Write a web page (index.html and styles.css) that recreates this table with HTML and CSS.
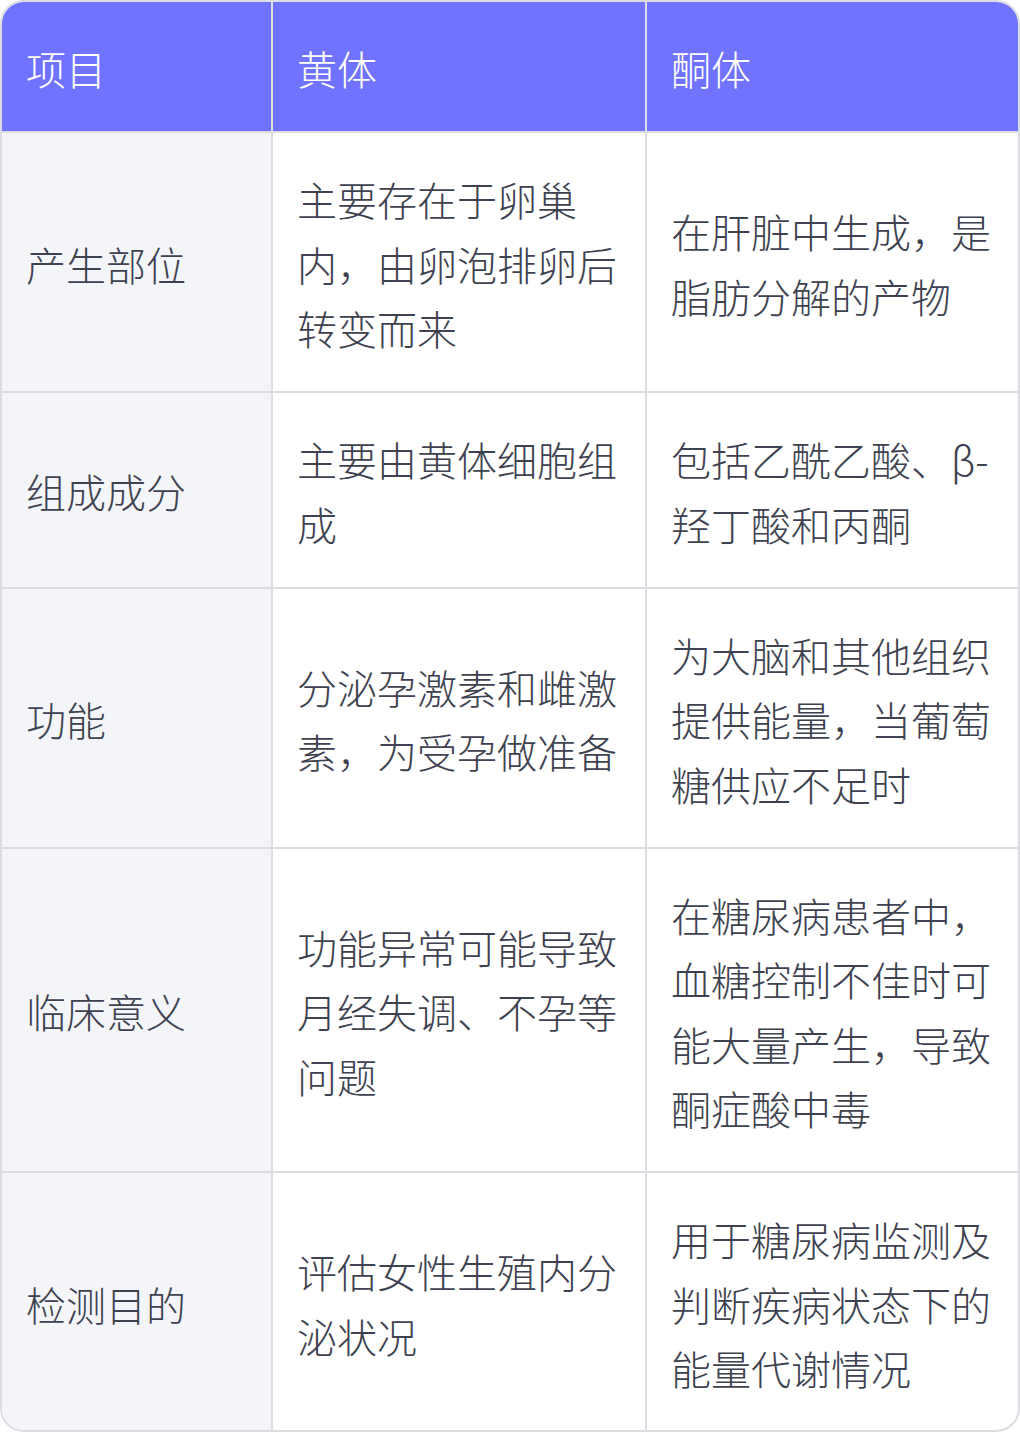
FILE: index.html
```html
<!DOCTYPE html>
<html lang="zh">
<head>
<meta charset="utf-8">
<link rel="stylesheet" href="styles.css">
</head>
<body>
<div class="wrap">
<table class="cmp">
  <colgroup><col class="c1"><col class="c2"><col class="c3"></colgroup>
  <thead>
    <tr><th>项目</th><th>黄体</th><th>酮体</th></tr>
  </thead>
  <tbody>
    <tr><td class="key">产生部位</td><td>主要存在于卵巢内，由卵泡排卵后转变而来</td><td>在肝脏中生成，是脂肪分解的产物</td></tr>
    <tr><td class="key">组成成分</td><td>主要由黄体细胞组成</td><td>包括乙酰乙酸、β-羟丁酸和丙酮</td></tr>
    <tr><td class="key">功能</td><td>分泌孕激素和雌激素，为受孕做准备</td><td>为大脑和其他组织提供能量，当葡萄糖供应不足时</td></tr>
    <tr><td class="key">临床意义</td><td>功能异常可能导致月经失调、不孕等问题</td><td>在糖尿病患者中，血糖控制不佳时可能大量产生，导致酮症酸中毒</td></tr>
    <tr><td class="key">检测目的</td><td>评估女性生殖内分泌状况</td><td>用于糖尿病监测及判断疾病状态下的能量代谢情况</td></tr>
  </tbody>
</table>
</div>
</body>
</html>
```

FILE: styles.css
```css
html, body {
  margin: 0;
  padding: 0;
  background: #ffffff;
}
.wrap {
  width: 1020px;
  height: 1432px;
  box-sizing: border-box;
  border: 2px solid #dcdde2;
  border-radius: 24px;
  overflow: hidden;
}
.cmp {
  width: 100%;
  border-collapse: collapse;
  table-layout: fixed;
  font-family: "Noto Sans CJK SC", "Noto Sans", sans-serif;
  font-size: 40px;
  line-height: 64.5px;
  color: #3e4250;
}
.c1 { width: 270px; }
.c2 { width: 374px; }
.c3 { width: 372px; }
.cmp th, .cmp td {
  padding: 34px 24px 30.5px;
  text-align: left;
  vertical-align: middle;
  font-weight: 300;
  border-right: 2px solid #dcdde2;
  border-bottom: 2px solid #dcdde2;
}
.cmp th:last-child, .cmp td:last-child { border-right: none; }
.cmp tbody tr:last-child td { border-bottom: none; }
.cmp th {
  background: #7073ff;
  color: #ffffff;
}
.cmp td.key {
  background: #f4f5f9;
}
```
